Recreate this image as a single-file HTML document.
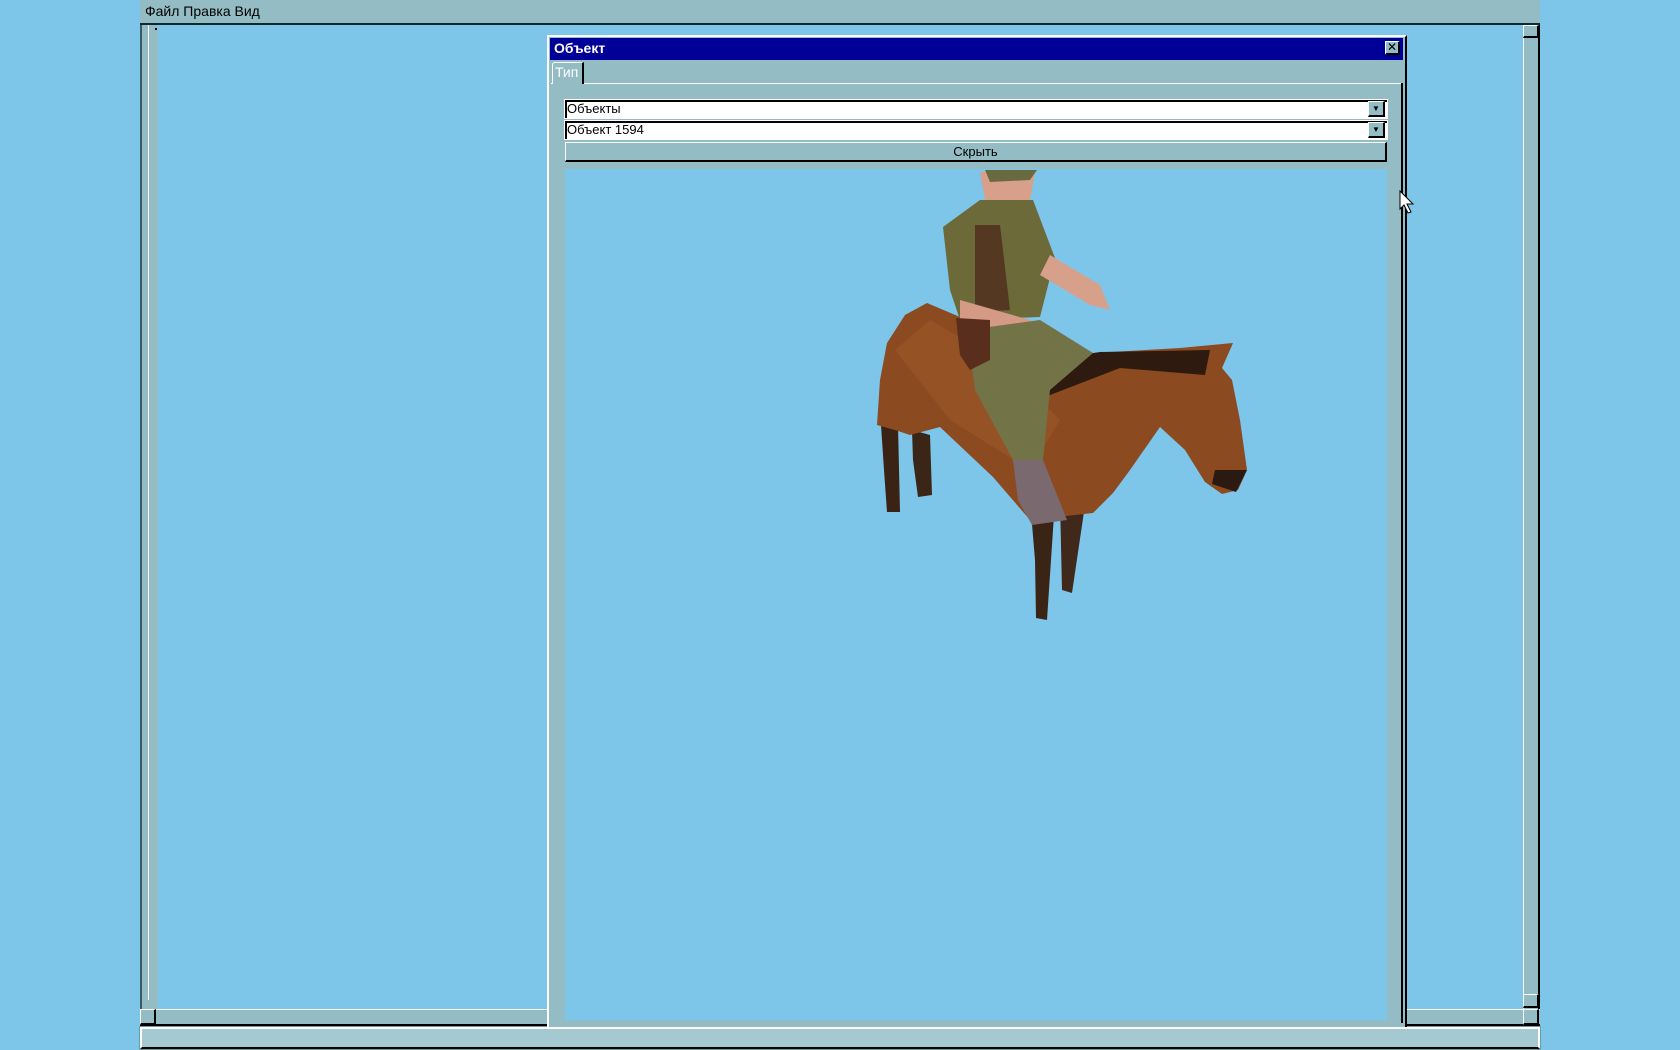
<!DOCTYPE html>
<html><head><meta charset="utf-8"><style>
*{margin:0;padding:0;box-sizing:border-box}
body{width:1680px;height:1050px;background:#7ec5ea;position:relative;overflow:hidden;font-family:"Liberation Sans","DejaVu Sans",sans-serif;font-size:13px;color:#000}
.a{position:absolute}
.g{background:#93bcc4}
.btn{background:#93bcc4;border-top:1px solid #fff;border-left:1px solid #fff;border-right:2px solid #000;border-bottom:2px solid #000}
</style></head><body>
<!-- menu -->
<div class="a g" style="left:140px;top:0;width:1400px;height:25px;border-bottom:2px solid #0b2a30"></div>
<div class="a" style="left:145px;top:3px;font-size:14px">Файл Правка Вид</div>
<!-- left strip -->
<div class="a g" style="left:140px;top:25px;width:18px;height:985px;border-left:2px solid #3a5a60"></div>
<div class="a" style="left:148px;top:25px;width:1px;height:975px;background:#fff"></div>
<div class="a" style="left:155px;top:28px;width:2px;height:2px;background:#000"></div>
<!-- right scrollbar -->
<div class="a g" style="left:1523px;top:25px;width:17px;height:985px;border-left:1px solid #fff;border-right:2px solid #000"></div>
<div class="a btn" style="left:1523px;top:25px;width:16px;height:13px"></div>
<div class="a btn" style="left:1523px;top:994px;width:16px;height:14px"></div>
<!-- hscroll -->
<div class="a g" style="left:140px;top:1009px;width:1400px;height:17px;border-top:1px solid #fff;border-bottom:2px solid #000"></div>
<div class="a btn" style="left:140px;top:1009px;width:16px;height:16px"></div>
<div class="a btn" style="left:1523px;top:1009px;width:16px;height:16px"></div>
<!-- status -->
<div class="a" style="left:140px;top:1027px;width:1400px;height:22px;background:#a5c9d1;border:2px solid #fff;border-bottom:2px solid #000;outline:1px solid #6a9aa2"></div>
<!-- dialog -->
<div class="a g" style="left:547px;top:35px;width:860px;height:992px;border-top:2px solid #fff;border-left:2px solid #fff;border-right:2px solid #000"></div>
<div class="a" style="left:550px;top:38px;width:853px;height:22px;background:#000099"></div>
<div class="a" style="left:554px;top:40px;color:#fff;font-weight:bold;font-size:14px">Объект</div>
<div class="a btn" style="left:1385px;top:41px;width:15px;height:14px;font-size:12px;line-height:10px;text-align:center;font-weight:bold">✕</div>
<!-- tab -->
<div class="a" style="left:551px;top:83px;width:851px;height:1px;background:#fff"></div>
<div class="a" style="left:1401px;top:83px;width:2px;height:940px;background:#000"></div>
<div class="a g" style="left:552px;top:62px;width:32px;height:22px;border-left:1px solid #fff;border-top:1px solid #fff;border-right:2px solid #000;border-radius:3px 0 0 0"></div>
<div class="a" style="left:555px;top:64px;color:#fff;font-size:14px">Тип</div>
<!-- combos -->
<div class="a" style="left:565px;top:100px;width:822px;height:18px;background:#fff;border-top:2px solid #000;border-left:2px solid #000;outline:1px solid #fff"></div>
<div class="a" style="left:567px;top:101px;font-size:13px">Объекты</div>
<div class="a btn" style="left:1368px;top:101px;width:17px;height:16px;font-size:8px;text-align:center;line-height:13px">▼</div>
<div class="a" style="left:565px;top:121px;width:822px;height:18px;background:#fff;border-top:2px solid #000;border-left:2px solid #000;outline:1px solid #fff"></div>
<div class="a" style="left:567px;top:122px;font-size:13px">Объект 1594</div>
<div class="a btn" style="left:1368px;top:122px;width:17px;height:16px;font-size:8px;text-align:center;line-height:13px">▼</div>
<div class="a btn" style="left:565px;top:142px;width:822px;height:20px;text-align:center;font-size:13px;line-height:17px">Скрыть</div>
<!-- viewport -->
<div class="a" style="left:565px;top:169px;width:822px;height:851px;background:#7ec5ea;overflow:hidden">
<svg width="822" height="851" viewBox="565 169 822 851" style="position:absolute;left:0;top:0">
<!-- hind legs -->
<polygon points="880,410 898,425 900,512 887,512 884,470" fill="#3a2314"/>
<polygon points="912,430 930,435 932,495 918,497 913,460" fill="#3b2516"/>
<!-- front legs -->
<polygon points="1030,500 1055,500 1047,620 1036,618 1035,560" fill="#3a2416"/>
<polygon points="1060,500 1085,505 1072,593 1062,590" fill="#40281a"/>
<!-- horse body -->
<polygon points="877,425 880,380 887,343 905,315 927,303 960,317 1010,345 1047,367 1093,353 1180,348 1233,343 1222,368 1232,380 1240,420 1247,470 1238,490 1222,494 1205,482 1185,450 1160,427 1130,470 1113,493 1093,513 1030,520 993,477 940,427 910,435 895,430" fill="#8b4a1f"/>
<polygon points="1000,380 1050,360 1100,352 1210,350 1205,375 1120,368 1050,395" fill="#2e1a0e"/>
<polygon points="895,350 930,320 1000,360 1060,420 1030,470 950,420" fill="#a0592a" opacity=".5"/>
<polygon points="1215,470 1247,470 1236,492 1212,484" fill="#2a1a12"/>
<!-- rider -->
<polygon points="980,172 1035,172 1030,200 1020,215 995,215 985,200" fill="#d8a08a"/>
<polygon points="985,170 1037,170 1030,180 990,182" fill="#6a6a40"/>
<polygon points="943,227 980,200 1033,200 1055,258 1040,317 960,320 950,290" fill="#6b6a38"/>
<polygon points="975,225 1000,225 1010,310 975,312" fill="#4a2418" opacity=".7"/>
<polygon points="1050,255 1100,285 1110,310 1090,305 1040,275" fill="#d7a08a"/>
<polygon points="960,300 1030,320 1060,345 1030,345 960,320" fill="#d49a86"/>
<polygon points="967,330 1040,320 1093,353 1050,390 1043,460 1013,460 975,390" fill="#737348"/>
<polygon points="956,318 990,320 990,360 970,370 960,355" fill="#5a2e1c"/>
<polygon points="1013,460 1043,460 1067,520 1032,525 1018,500" fill="#7a6a70"/>
</svg>
</div>
<!-- cursor -->
<svg class="a" style="left:1399px;top:190px" width="16" height="26" viewBox="0 0 16 26"><polygon points="1,1 1,19 5,15 9,23 12,22 8,14 14,14" fill="#fff" stroke="#000" stroke-width="1"/></svg>
</body></html>
